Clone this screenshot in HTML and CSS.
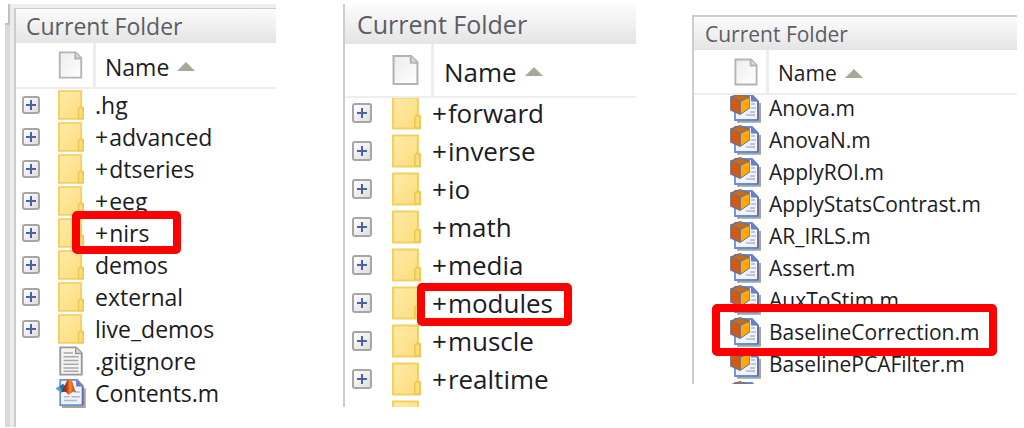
FILE: index.html
```html
<!DOCTYPE html>
<html lang="en">
<head>
    <meta charset="UTF-8">
    <title>Current Folder</title>
    <link rel="stylesheet" href="styles.css">
</head>
<body>
    <!-- shared icons -->
    <svg class="sprite" aria-hidden="true">
        <defs>
            <linearGradient id="folderFill" x1="0" y1="0" x2="1" y2="1">
                <stop offset="0" stop-color="#ffeaa6"/>
                <stop offset="1" stop-color="#fcdc7c"/>
            </linearGradient>
            <linearGradient id="pageFill" x1="0" y1="0" x2="1" y2="1">
                <stop offset="0" stop-color="#ececec"/>
                <stop offset="1" stop-color="#ffffff"/>
            </linearGradient>
            <linearGradient id="peakFill" x1="0" y1="0" x2="1" y2="0">
                <stop offset="0" stop-color="#3f2038"/>
                <stop offset="0.4" stop-color="#c23c14"/>
                <stop offset="0.6" stop-color="#f58a2c"/>
                <stop offset="1" stop-color="#b8330f"/>
            </linearGradient>
        </defs>
        <symbol id="folder" viewBox="0 0 28 32">
            <path d="M1 1h24v18h2v12H1z" fill="url(#folderFill)" stroke="#f2d060" stroke-width="2"/>
            <path d="M22 30.500V20l2.500-2 2.500 2v10.500z" fill="#fbdc7a" stroke="#ecc850" stroke-width="1.500"/>
        </symbol>
        <symbol id="page" viewBox="0 0 26 30">
            <path d="M1.500 1.500h17l6 6v21h-23z" fill="url(#pageFill)" stroke="#b4b4b4" stroke-width="2"/>
            <path d="M18 1.500v6.500h6.500" fill="#d8d8d8" stroke="#b4b4b4" stroke-width="2"/>
        </symbol>
        <symbol id="text" viewBox="0 0 26 32">
            <path d="M1.500 1.500h17l6 6v23h-23z" fill="#f4f4f4" stroke="#999" stroke-width="2"/>
            <path d="M18 1.500v6.500h6.500" fill="#ddd" stroke="#999" stroke-width="1.500"/>
            <path d="M5 7.500h10M5 11.500h16M5 15.500h16M5 19.500h16M5 23.500h16M5 27h16" stroke="#a8a8a8" stroke-width="1.500"/>
        </symbol>
        <symbol id="script" viewBox="0 0 32 32">
            <path d="M7 31h24V11" fill="none" stroke="#a9a592" stroke-width="2.500"/>
            <path d="M5 2h18l6 6v21H5z" fill="#edf4ff" stroke="#6d8fd0" stroke-width="1.800"/>
            <path d="M22 1.500V9h7.500z" fill="#6b7bbd"/>
            <path d="M29 9v20" stroke="#5f6db0" stroke-width="2"/>
            <path d="M20 15h6M9 20h6M17 20h9M9 24h14" stroke="#b4b8c2" stroke-width="1.500"/>
            <path d="M0 11l6-3 4 5-4 3z" fill="#42a5dc"/>
            <path d="M4 9l4-3 3 3-3 6z" fill="#2c6f9e"/>
            <path d="M6 15C10 11 11 1 15 1c4 0 4 10 7 14-3-1-4 0-5 1-2 1-3 3-4 1s-3-3-7-2z" fill="url(#peakFill)"/>
        </symbol>
        <symbol id="classdef" viewBox="0 0 31 30">
            <path d="M7 28.500h23V10" fill="none" stroke="#a9a592" stroke-width="2.500"/>
            <path d="M5 2h17l6 6v19H5z" fill="#edf4ff" stroke="#5f8fd8" stroke-width="1.800"/>
            <path d="M21 1V8.500h7.500z" fill="#6b7bbd"/>
            <path d="M28 8v19" stroke="#6470b0" stroke-width="2"/>
            <path d="M21 11h4M21 15h5M20 19h5M16 22h9" stroke="#b0b4be" stroke-width="1.300"/>
            <path d="M1 4l9-3 9 3v11l-9 6-9-4z" fill="#d86a10" stroke="#7d6f7c" stroke-width="1.800"/>
            <path d="M1 4l9 4v12l-9-4z" fill="#cf5c12"/>
            <path d="M10 8l9-4v11l-9 6z" fill="#ffaa08"/>
            <path d="M1 4l9 4 9-4M10 8v13" fill="none" stroke="#7d6f7c" stroke-width="1.800"/>
        </symbol>
    </svg>

    <main class="wrap">
        <section class="panel panel-root">
            <div class="edge"></div>
            <div class="inner">
                <h2 class="title">Current Folder</h2>
                <div class="cols">
                    <svg class="page"><use href="#page"/></svg>
                    <button class="sort" type="button">Name</button>
                </div>
                <ul class="list">
                    <li><button class="plus" type="button" aria-label="Expand"></button><svg class="icon"><use href="#folder"/></svg><span>.hg</span></li>
                    <li><button class="plus" type="button" aria-label="Expand"></button><svg class="icon"><use href="#folder"/></svg><span><i>+</i>advanced</span></li>
                    <li><button class="plus" type="button" aria-label="Expand"></button><svg class="icon"><use href="#folder"/></svg><span><i>+</i>dtseries</span></li>
                    <li><button class="plus" type="button" aria-label="Expand"></button><svg class="icon"><use href="#folder"/></svg><span><i>+</i>eeg</span></li>
                    <li class="marked"><button class="plus" type="button" aria-label="Expand"></button><svg class="icon"><use href="#folder"/></svg><span><i>+</i>nirs</span></li>
                    <li><button class="plus" type="button" aria-label="Expand"></button><svg class="icon"><use href="#folder"/></svg><span>demos</span></li>
                    <li><button class="plus" type="button" aria-label="Expand"></button><svg class="icon"><use href="#folder"/></svg><span>external</span></li>
                    <li><button class="plus" type="button" aria-label="Expand"></button><svg class="icon"><use href="#folder"/></svg><span>live_demos</span></li>
                    <li><svg class="icon"><use href="#text"/></svg><span>.gitignore</span></li>
                    <li><svg class="icon script"><use href="#script"/></svg><span>Contents.m</span></li>
                </ul>
            </div>
        </section>

        <section class="panel panel-nirs">
            <div class="inner">
                <h2 class="title">Current Folder</h2>
                <div class="cols">
                    <svg class="page"><use href="#page"/></svg>
                    <button class="sort" type="button">Name</button>
                </div>
                <ul class="list">
                    <li><button class="plus" type="button" aria-label="Expand"></button><svg class="icon"><use href="#folder"/></svg><span><i>+</i>forward</span></li>
                    <li><button class="plus" type="button" aria-label="Expand"></button><svg class="icon"><use href="#folder"/></svg><span><i>+</i>inverse</span></li>
                    <li><button class="plus" type="button" aria-label="Expand"></button><svg class="icon"><use href="#folder"/></svg><span><i>+</i>io</span></li>
                    <li><button class="plus" type="button" aria-label="Expand"></button><svg class="icon"><use href="#folder"/></svg><span><i>+</i>math</span></li>
                    <li><button class="plus" type="button" aria-label="Expand"></button><svg class="icon"><use href="#folder"/></svg><span><i>+</i>media</span></li>
                    <li class="marked"><button class="plus" type="button" aria-label="Expand"></button><svg class="icon"><use href="#folder"/></svg><span><i>+</i>modules</span></li>
                    <li><button class="plus" type="button" aria-label="Expand"></button><svg class="icon"><use href="#folder"/></svg><span><i>+</i>muscle</span></li>
                    <li><button class="plus" type="button" aria-label="Expand"></button><svg class="icon"><use href="#folder"/></svg><span><i>+</i>realtime</span></li>
                    <li><svg class="icon"><use href="#folder"/></svg></li>
                </ul>
            </div>
        </section>

        <section class="panel panel-modules">
            <div class="inner">
                <h2 class="title">Current Folder</h2>
                <div class="cols">
                    <svg class="page"><use href="#page"/></svg>
                    <button class="sort" type="button">Name</button>
                </div>
                <ul class="list">
                    <li><svg class="icon"><use href="#classdef"/></svg><span>Anova.m</span></li>
                    <li><svg class="icon"><use href="#classdef"/></svg><span>AnovaN.m</span></li>
                    <li><svg class="icon"><use href="#classdef"/></svg><span>ApplyROI.m</span></li>
                    <li><svg class="icon"><use href="#classdef"/></svg><span>ApplyStatsContrast.m</span></li>
                    <li><svg class="icon"><use href="#classdef"/></svg><span>AR_IRLS.m</span></li>
                    <li><svg class="icon"><use href="#classdef"/></svg><span>Assert.m</span></li>
                    <li><svg class="icon"><use href="#classdef"/></svg><span>AuxToStim.m</span></li>
                    <li class="marked"><svg class="icon"><use href="#classdef"/></svg><span>BaselineCorrection.m</span></li>
                    <li><svg class="icon"><use href="#classdef"/></svg><span>BaselinePCAFilter.m</span></li>
                    <li><svg class="icon"><use href="#classdef"/></svg></li>
                </ul>
            </div>
        </section>
    </main>
</body>
</html>
```
FILE: styles.css
```css
/* reset */
html,body,h2,ul,li{margin: 0;padding: 0;}
*,*:before,*:after{box-sizing: border-box;}
body{background: #fff;font: 23px "Open Sans", "Noto Sans", sans-serif;color: #1c1c24;}
li{list-style: none;}
button{margin: 0;padding: 0;border: 0;background: none;font: inherit;color: inherit;}
svg{display: block;flex: none;}
i{font-style: normal;}

.sprite{position: absolute;width: 0;height: 0;}

.wrap{
    display: grid;
    grid-template-columns: 282fr 293fr 325fr;
    gap: 56px;
    align-items: start;
    padding: 4px 7px 0 5px;
}

/* panel */
.panel{
    display: flex;
}
.inner{
    flex: 1;
    min-width: 0;
    border-left: 2px solid #cdcdcd;
}
.title{
    display: flex;
    align-items: center;
    background: linear-gradient(#fcfcfc, #e4e4e4);
    color: #5c5c66;
    font-size: 23px;
    font-weight: 400;
    white-space: nowrap;
}
.cols{
    display: flex;
    align-items: stretch;
    border-bottom: 2px solid #ededed;
}
.cols .page{
    align-self: center;
}
.sort{
    display: flex;
    align-items: center;
    padding-top: 3px;
    border-left: 3px solid #ededed;
}
.sort:after{
    content: "";
    margin-left: 8px;
    border: 9px solid transparent;
    border-top: 0;
    border-bottom: 9px solid #a8a894;
}
.list{
    overflow: hidden;
}
.list li{
    display: flex;
    align-items: center;
    position: relative;
    line-height: 1;
    white-space: nowrap;
}
.list i{
    margin-right: 1px;
}
.list .icon{
    margin-right: 11px;
}

/* expander */
.plus{
    flex: none;
    border: 2px solid #a6a6a6;
    border-radius: 3px;
    background:
        linear-gradient(#4a62a6, #4a62a6) center / 10px 2px no-repeat,
        linear-gradient(#4a62a6, #4a62a6) center / 2px 10px no-repeat,
        linear-gradient(135deg, #fff, #dedede);
}

/* red frame over a row */
.marked:after{
    content: "";
    position: absolute;
    z-index: 1;
    border: 8px solid #fe0000;
    border-radius: 5px;
}

/* toolbox root */
.panel-root{
    margin-right: 11px;
}
.panel-root .edge{
    width: 9px;
    border-left: 5px solid #dadada;
    background: #ececec;
}
/* end of the neighbouring tab strip */
.panel-root .edge:before{
    content: "";
    display: block;
    width: 5px;
    height: 21px;
    margin-left: -5px;
    background: #fff;
    border-right: 2px solid #c0c0c0;
    border-bottom: 2px solid #c0c0c0;
}
.panel-root .inner{
    margin-top: 4px;
    border-top: 1px solid #cdcdcd;
    box-shadow: 0 -4px #efefef;
    padding-bottom: 18px;
}
.panel-root .title{
    height: 34px;
    padding-left: 10px;
}
.panel-root .cols{
    height: 46px;
    padding-left: 42px;
}
.panel-root .page{
    width: 25px;
    height: 28px;
    margin-right: 10px;
}
.panel-root .sort{
    padding-left: 9px;
}
.panel-root li{
    height: 32px;
}
.panel-root li:before{
    content: "";
    width: 6px;
}
.panel-root .plus{
    width: 18px;
    height: 18px;
    margin-right: 18px;
}
.panel-root .icon{
    width: 26px;
    height: 30px;
}
.panel-root .icon:first-child{
    margin-left: 36px;
}
.panel-root .script:first-child{
    width: 31px;
    margin-left: 33px;
    margin-right: 9px;
}
.panel-root .marked:after{
    left: 56px;
    top: -6px;
    width: 109px;
    height: 43px;
}

/* +nirs */
.panel-nirs{
    font-size: 26px;
}
.panel-nirs .title{
    height: 40px;
    padding-left: 12px;
    font-size: 25px;
}
.panel-nirs .cols{
    height: 54px;
    padding-left: 47px;
}
.panel-nirs .page{
    width: 27px;
    height: 32px;
    margin-right: 12px;
}
.panel-nirs .sort{
    padding-left: 10px;
}
.panel-nirs .list{
    height: 309px;
}
.panel-nirs li{
    height: 38px;
}
.panel-nirs li:first-child{
    margin-top: -4px;
}
.panel-nirs li:before{
    content: "";
    width: 7px;
}
.panel-nirs .plus{
    width: 20px;
    height: 20px;
    margin-right: 20px;
}
.panel-nirs .icon{
    width: 29px;
    height: 36px;
}
.panel-nirs .icon:first-child{
    margin-left: 40px;
}
.panel-nirs .marked:after{
    left: 72px;
    top: -1px;
    width: 155px;
    height: 43px;
}

/* +modules */
.panel-modules{
    margin-top: 11px;
    font-size: 21px;
}
.panel-modules .inner{
    border-top: 2px solid #cdcdcd;
}
.panel-modules .title{
    height: 33px;
    padding-left: 11px;
    font-size: 21px;
}
.panel-modules .cols{
    height: 45px;
    padding-left: 40px;
}
.panel-modules .page{
    width: 24px;
    height: 28px;
    margin-right: 8px;
}
.panel-modules .sort{
    padding-left: 9px;
}
.panel-modules .list{
    height: 289px;
}
.panel-modules li{
    height: 32px;
}
.panel-modules li:first-child{
    margin-top: -3px;
}
.panel-modules .icon{
    width: 31px;
    height: 30px;
    margin-left: 36px;
    margin-right: 8px;
}
.panel-modules .marked:after{
    left: 18px;
    top: -12px;
    width: 285px;
    height: 52px;
}
```
